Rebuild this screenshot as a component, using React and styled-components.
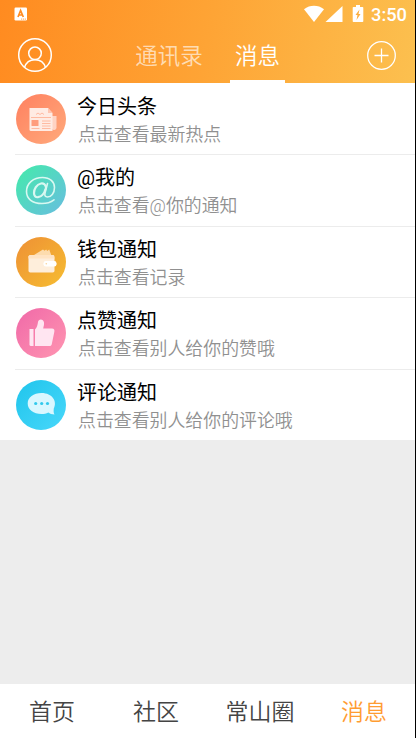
import React from 'react';
import styled, { createGlobalStyle } from 'styled-components';

const GlobalStyle = createGlobalStyle`
  * { box-sizing: border-box; }
  body { margin: 0; background: #000; }
`;

const Screen = styled.div`
  width: 415px;
  height: 738px;
  display: flex;
  flex-direction: column;
  background: #ededed;
  font-family: Roboto, "Noto Sans CJK SC", sans-serif;
  overflow: hidden;
`;

const Header = styled.header`
  height: 83px;
  flex: none;
  display: flex;
  flex-direction: column;
  background: linear-gradient(100deg, #ff8b20 0%, #fea435 50%, #fcc04f 100%);
  color: #fff;
`;

const StatusBar = styled.div`
  height: 28px;
  display: flex;
  align-items: center;
  justify-content: space-between;
  padding: 0 8px 0 14px;
`;

const StatusIcons = styled.div`
  display: flex;
  align-items: center;
`;

const Clock = styled.span`
  font: 500 18.3px/28px Roboto, sans-serif;
  margin: 1px 0 0 7px;
  width: 36px;
  white-space: nowrap;
`;

const TitleBar = styled.div`
  height: 55px;
  display: flex;
  justify-content: space-between;
  padding: 0 18px 0 17px;
`;

const IconButton = styled.button`
  width: 36px;
  height: 54px;
  padding: 0;
  border: 0;
  background: none;
  display: flex;
  align-items: center;
  justify-content: ${(p) => p.$align};
`;

const Tabs = styled.nav`
  display: flex;
  gap: 21px;
`;

const Tab = styled.div`
  width: ${(p) => p.$width}px;
  height: 55px;
  text-align: center;
  white-space: nowrap;
  font-size: 22.5px;
  font-weight: 350;
  line-height: 57px;
  color: ${(p) => (p.$active ? '#fff' : 'rgba(255,255,255,0.65)')};
  border-bottom: 3px solid ${(p) => (p.$active ? '#fff' : 'transparent')};
`;

const List = styled.main`
  flex: none;
  background: #fff;
`;

const Row = styled.div`
  height: ${(p) => p.$height}px;
  margin-left: 15px;
  padding: 10px 0 0 0.5px;
  display: flex;
  border-bottom: 1px solid #ececec;
  &:first-child { padding-top: 11px; }
  &:last-child { border-bottom-color: transparent; }
`;

const Avatar = styled.div`
  width: 50px;
  height: 50px;
  border-radius: 50%;
  flex: none;
  background: linear-gradient(135deg, ${(p) => p.$from}, ${(p) => p.$to});
  svg { display: block; }
`;

const RowText = styled.div`
  margin: -1px 0 0 11.5px;
  white-space: nowrap;
`;

const RowTitle = styled.div`
  font-size: 20px;
  line-height: 29px;
  color: #000;
`;

const RowHint = styled.div`
  margin: -2px 0 0 1px;
  font-size: 17.9px;
  line-height: 29px;
  font-weight: 350;
  color: #909090;
`;

const BottomNav = styled.nav`
  height: 54px;
  margin-top: auto;
  flex: none;
  display: grid;
  grid-template-columns: repeat(4, 104px);
  background: #fff;
`;

const NavItem = styled.div`
  text-align: center;
  font-size: 23px;
  font-weight: 350;
  line-height: 57px;
  color: ${(p) => (p.$active ? '#ff9c32' : '#444')};
`;

const NewsIcon = () => (
  <svg width="50" height="50" viewBox="0 0 50 50">
    <path d="M36 22h4.500v12a2.500 2.500 0 0 1-4.500 1z" fill="#ffd3c3" />
    <path d="M13.500 14H32l4.500 5v18H15a1.500 1.500 0 0 1-1.500-1.500z" fill="#ffebe3" />
    <path d="M32 14v5h4.500z" fill="#ffc5b0" />
    <path d="M20 20.500l2-1.500 2 1.500 2-1.500 2 1.500M15 23.500h20M26 27h8.500M26 29.500h8.500M26 32h8.500M26 34.500h8.500M15.500 34.500h8" fill="none" stroke="#ffb49a" strokeWidth="0.900" />
    <rect x="15.500" y="26" width="7" height="6" rx="0.500" fill="#ff9d7d" />
  </svg>
);

const AtIcon = () => (
  <svg width="50" height="50" viewBox="0 0 50 50" fill="none" stroke="#d9f8f1" strokeLinecap="round">
    <path d="M38 34.800C34.500 37.400 30.500 38.500 26 38.500 16.500 38.500 10.500 34 10.500 26.500 10.500 18 17.500 12.500 26.500 12.500 34 12.500 38.500 17 38.500 22.500 38.500 28.500 35 32 31.500 32 29 32 28.500 30.500 29 28L31.500 18.500" strokeWidth="1.600" />
    <path d="M30 22.500C29.500 19.500 27.500 18 25 18.500 20.500 19.500 18 24 18 28 18 31 19.500 32.500 22 32.200 25.500 31.800 28.500 28 29.500 24" strokeWidth="2.200" />
  </svg>
);

const WalletIcon = () => (
  <svg width="50" height="50" viewBox="0 0 50 50">
    <path d="M18 18l9-5.500 1.500 1.200 1.700-1.200 1 1.500 2-1.500 2 5.500z" fill="#fddcae" />
    <rect x="12.500" y="18" width="26" height="17.500" rx="1.800" fill="#feeedb" />
    <path d="M14 18h23.500l1 3.500h-26V19.500z" fill="#ffe4c4" />
    <rect x="27.500" y="24" width="13" height="5.500" rx="2.300" fill="#fff" />
    <circle cx="30.300" cy="26.800" r="0.800" fill="#fad398" />
  </svg>
);

const LikeIcon = () => (
  <svg width="50" height="50" viewBox="0 0 50 50" fill="#ffe5f1">
    <path d="M13.500 21H17.500v17h-2.500a1.500 1.500 0 0 1-1.500-1.500z" />
    <path d="M19 21.500c2-1.500 2.500-4.500 3-7.500.3-3.500 5.500-3.500 6 .5.300 2.500-.5 4-.8 6H36c2 0 2.800 1.500 2.300 3.500l-2.500 12c-.3 1.500-1 2-2.300 2H19z" />
  </svg>
);

const CommentIcon = () => (
  <svg width="50" height="50" viewBox="0 0 50 50">
    <path d="M25.500 13C17.500 13 11.700 17.500 11.700 23.500S17.500 34 25.500 34c2.500 0 4.800-.4 6.800-1.500 1.500 1.200 3.500 2 6.200 2-1-1.500-1-3-.7-6C41.500 21.500 36.500 13 25.500 13z" fill="#d9f7ff" />
    <g fill="#31c9ed"><circle cx="19.700" cy="23.500" r="1.600" /><circle cx="25.700" cy="23.500" r="1.600" /><circle cx="31.500" cy="23.500" r="1.600" /></g>
  </svg>
);

const messages = [
  { title: '今日头条', hint: '点击查看最新热点', from: '#ff805f', to: '#ffaa7c', height: 72, Icon: NewsIcon },
  { title: '@我的', hint: '点击查看@你的通知', from: '#43ebaa', to: '#69bde0', height: 72, Icon: AtIcon },
  { title: '钱包通知', hint: '点击查看记录', from: '#ee9035', to: '#f6bd31', height: 71, Icon: WalletIcon },
  { title: '点赞通知', hint: '点击查看别人给你的赞哦', from: '#f069a8', to: '#ff95b1', height: 72, Icon: LikeIcon },
  { title: '评论通知', hint: '点击查看别人给你的评论哦', from: '#20c5ec', to: '#48d7fa', height: 70, Icon: CommentIcon },
];

export default function App() {
  return (
    <Screen>
      <GlobalStyle />
      <Header>
        <StatusBar>
          <svg width="14" height="14" viewBox="0 0 14 14">
            <rect x="0.500" y="0.500" width="12.500" height="13" rx="1.200" fill="#fff" />
            <path d="M4 10l2.600-6.500L9.300 10M5 8h3.500" fill="none" stroke="#ff8d24" strokeWidth="1.700" />
            <path d="M7 12.200h5" stroke="#ffb877" strokeWidth="1.300" strokeDasharray="1.200 .7" />
          </svg>
          <StatusIcons>
            <svg width="61" height="18" viewBox="0 0 61 18" fill="#fff">
              <path d="M1 4.200C7-.3 15-.3 21 4.200L11 17z" />
              <path d="M39.500 1v16h-17z" />
              <path d="M53 0h4v2h2.500q.8 0 .8.800v13.400q0 .8-.8.800h-9q-.8 0-.8-.8V2.800q0-.8.800-.8H53z" />
              <path d="M56.500 4.500l-4 5.500h2l-1 5 4-6h-2z" fill="#fbae3f" />
            </svg>
            <Clock>3:50</Clock>
          </StatusIcons>
        </StatusBar>
        <TitleBar>
          <IconButton $align="flex-start" aria-label="profile">
            <svg width="36" height="36" viewBox="0 0 36 36" fill="none" stroke="#fff" strokeWidth="1.500">
              <circle cx="18" cy="18" r="16.300" />
              <circle cx="18" cy="16.300" r="6.300" />
              <path d="M7.500 30.500C9 25.500 13 22.700 18 22.700S27 25.500 28.500 30.500" />
            </svg>
          </IconButton>
          <Tabs>
            <Tab $width={80}>通讯录</Tab>
            <Tab $width={55} $active>消息</Tab>
          </Tabs>
          <IconButton $align="flex-end" aria-label="add">
            <svg width="30" height="30" viewBox="0 0 30 30" fill="none" stroke="#fff" strokeWidth="1.300">
              <circle cx="14.500" cy="15.500" r="13.800" />
              <path d="M14.500 8.500v14M7.500 15.500h14" />
            </svg>
          </IconButton>
        </TitleBar>
      </Header>
      <List>
        {messages.map(({ title, hint, from, to, height, Icon }) => (
          <Row key={title} $height={height}>
            <Avatar $from={from} $to={to}><Icon /></Avatar>
            <RowText>
              <RowTitle>{title}</RowTitle>
              <RowHint>{hint}</RowHint>
            </RowText>
          </Row>
        ))}
      </List>
      <BottomNav>
        <NavItem>首页</NavItem>
        <NavItem>社区</NavItem>
        <NavItem>常山圈</NavItem>
        <NavItem $active>消息</NavItem>
      </BottomNav>
    </Screen>
  );
}
